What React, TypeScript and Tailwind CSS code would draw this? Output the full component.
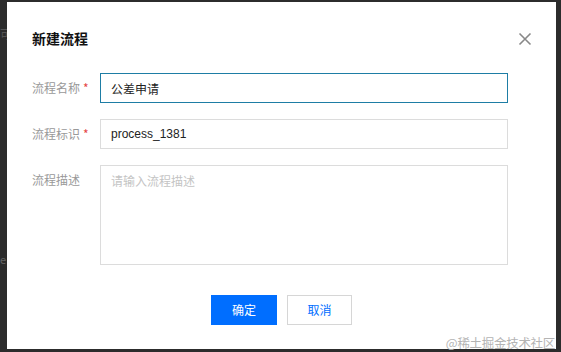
import { useState } from 'react'

const cn = '"Noto Sans CJK SC", "Liberation Sans", sans-serif'

function Label({ text, required }: { text: string; required?: boolean }) {
  return (
    <div className="w-[68px] shrink-0 text-[12px] text-[#999] leading-[18px]">
      {text}
      {required && <span className="ml-[3px] text-[#e54545]">*</span>}
    </div>
  )
}

export default function App() {
  const [name, setName] = useState('公差申请')
  const [key, setKey] = useState('process_1381')
  const [desc, setDesc] = useState('')

  return (
    <div
      className="relative w-[561px] h-[352px] bg-[#2c2c2c] overflow-hidden"
      style={{ fontFamily: cn }}
    >
      <div className="absolute left-0 top-[28px] text-[12px] text-[#555] leading-none">可</div>
      <div className="absolute left-0 top-[254px] text-[11px] text-[#666] leading-none">e</div>

      <div className="absolute left-[7px] top-[2px] w-[549px] h-[347px] bg-white flex flex-col">
        <div className="flex items-center justify-between pl-[25px] pr-[24px] pt-[27px]">
          <h2 className="text-[14px] font-bold text-[#111] leading-[18px]">新建流程</h2>
          <svg width="14" height="14" viewBox="0 0 14 14" className="mt-[1px]">
            <path d="M1.5 1.5L12.5 12.5M12.5 1.5L1.5 12.5" stroke="#888" strokeWidth="1.6" />
          </svg>
        </div>

        <div className="flex flex-col pl-[25px] pt-[26px]">
          <div className="flex items-center">
            <Label text="流程名称" required />
            <input
              value={name}
              onChange={(e) => setName(e.target.value)}
              className="w-[408px] h-[30px] border border-[#1e7da5] px-[10px] text-[12px] text-[#222] outline-none"
              style={{ fontFamily: cn }}
            />
          </div>
          <div className="flex items-center mt-[16px]">
            <Label text="流程标识" required />
            <input
              value={key}
              onChange={(e) => setKey(e.target.value)}
              className="w-[408px] h-[30px] border border-[#dcdcdc] px-[10px] text-[12px] text-[#222] outline-none"
              style={{ fontFamily: '"Liberation Sans", "Noto Sans CJK SC", sans-serif' }}
            />
          </div>
          <div className="flex items-start mt-[16px]">
            <div className="pt-[6px]">
              <Label text="流程描述" />
            </div>
            <textarea
              value={desc}
              onChange={(e) => setDesc(e.target.value)}
              placeholder="请输入流程描述"
              className="w-[408px] h-[100px] border border-[#dcdcdc] px-[10px] py-[6px] text-[12px] text-[#222] placeholder:text-[#c4c4c4] outline-none resize-none"
              style={{ fontFamily: cn }}
            />
          </div>
        </div>

        <div className="flex justify-center gap-[10px] mt-[30px]">
          <button className="w-[66px] h-[30px] bg-[#006eff] text-white text-[12px]">确定</button>
          <button className="w-[65px] h-[30px] border border-[#d6d6d6] bg-white text-[#006eff] text-[12px]">
            取消
          </button>
        </div>
      </div>

      <div className="absolute right-[6px] bottom-[3px] text-[12.5px] text-[#b4b4b4] leading-none tracking-[-0.3px]">
        @稀土掘金技术社区
      </div>
    </div>
  )
}
